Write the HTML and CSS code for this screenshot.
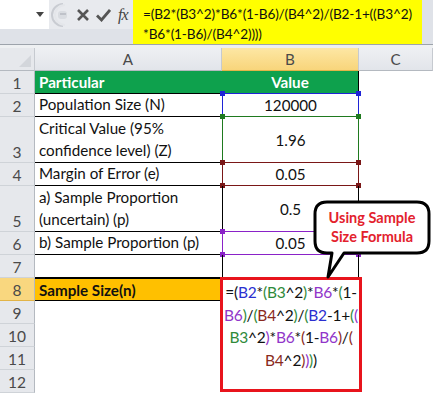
FILE: index.html
```html
<!DOCTYPE html>
<html lang="en">
<head>
    <meta charset="UTF-8">
    <meta name="viewport" content="width=device-width, initial-scale=1.0">
    <title>Sample Size Formula</title>
    <link rel="stylesheet" href="styles.css">
</head>
<body>
    <div class="formula-bar">
        <div class="bar-tools">
            <div class="tools-row">
                <div class="name-box">
                    <svg class="drop" width="8" height="5" viewBox="0 0 8 5"><path d="M0 0H8L4 5Z" fill="#444"/></svg>
                </div>
                <svg class="knob" width="18" height="26" viewBox="0 0 18 26">
                    <path d="M13 2A11 11 0 0 0 13 24" fill="none" stroke="#c9ccd2" stroke-width="2"/>
                    <path d="M15 3A10 10 0 0 0 15 23" fill="none" stroke="#e4e6ea" stroke-width="2"/>
                    <rect x="8" y="9" width="9" height="8" rx="3" fill="#d9dce1"/>
                    <path d="M10 12H16" stroke="#b6bac0" stroke-width="1.5"/>
                </svg>
                <svg class="tool" width="14" height="14" viewBox="0 0 14 14">
                    <path d="M2 2L12 12M12 2L2 12" stroke="#555" stroke-width="2.6"/>
                </svg>
                <svg class="tool" width="15" height="14" viewBox="0 0 15 14">
                    <path d="M1 7.5L5.5 12L14 2" fill="none" stroke="#555" stroke-width="2.8"/>
                </svg>
                <span class="fx">fx</span>
            </div>
        </div>
        <div class="formula-input">=(B2*(B3^2)*B6*(1-B6)/(B4^2)/(B2-1+((B3^2)<br>*B6*(1-B6)/(B4^2))))</div>
    </div>
    <div class="bar-gap"></div>

    <div class="sheet">
        <div class="corner"><svg width="12" height="12" viewBox="0 0 12 12"><path d="M12 0V12H0Z" fill="#d3d6db"/></svg></div>
        <div class="ch">A</div>
        <div class="ch ch-active">B</div>
        <div class="ch">C</div>

        <div class="rh">1</div>
        <div class="cell head">Particular</div>
        <div class="cell head val">Value</div>
        <div class="cell blank"></div>

        <div class="rh">2</div>
        <div class="cell txt">Population Size (N)</div>
        <div class="cell val ref ref-blue">120000<i class="h tl"></i><i class="h tr"></i><i class="h bl"></i><i class="h br"></i></div>
        <div class="cell blank"></div>

        <div class="rh">3</div>
        <div class="cell txt">Critical Value (95%<br>confidence level) (Z)</div>
        <div class="cell val ref ref-green">1.96<i class="h tl"></i><i class="h tr"></i><i class="h bl"></i><i class="h br"></i></div>
        <div class="cell blank"></div>

        <div class="rh">4</div>
        <div class="cell txt">Margin of Error (e)</div>
        <div class="cell val ref ref-brown">0.05<i class="h tl"></i><i class="h tr"></i><i class="h bl"></i><i class="h br"></i></div>
        <div class="cell blank"></div>

        <div class="rh">5</div>
        <div class="cell txt">a) Sample Proportion<br>(uncertain) (p)</div>
        <div class="cell val plain">0.5</div>
        <div class="cell blank"></div>

        <div class="rh">6</div>
        <div class="cell txt">b) Sample Proportion (p)</div>
        <div class="cell val ref ref-purple">0.05<i class="h tl"></i><i class="h tr"></i><i class="h bl"></i><i class="h br"></i></div>
        <div class="cell blank"></div>

        <div class="rh">7</div>
        <div class="cell txt"></div>
        <div class="cell val plain"></div>
        <div class="cell blank"></div>

        <div class="rh rh-active">8</div>
        <div class="cell result">Sample Size(n)</div>
        <div class="cell formula">
            <span class="k">=(</span><span class="c-blue">B2</span>*<span class="c-green">(B3</span>^2<span class="c-green">)</span>*<span class="c-purple">B6</span>*<span class="c-green">(</span>1-<br>
            <span class="c-purple">B6</span><span class="c-green">)</span>/<span class="c-green">(</span><span class="c-brown">B4</span>^2<span class="c-green">)</span>/<span class="c-green">(</span><span class="c-blue">B2</span>-1+<span class="c-green">(</span><span class="c-purple">(</span><br>
            <span class="c-green">B3</span>^2<span class="c-purple">)</span>*<span class="c-purple">B6</span>*<span class="c-brown">(</span>1-<span class="c-purple">B6</span><span class="c-brown">)</span>/<span class="c-brown">(</span><br>
            <span class="c-brown">B4</span>^2<span class="c-brown">)</span><span class="c-purple">)</span><span class="c-green">)</span>)
        </div>
        <div class="cell blank"></div>

        <div class="rh">9</div>
        <div class="cell"></div>
        <div class="cell blank"></div>

        <div class="rh">10</div>
        <div class="cell"></div>
        <div class="cell blank"></div>

        <div class="rh">11</div>
        <div class="cell"></div>
        <div class="cell blank"></div>

        <div class="rh">12</div>
        <div class="cell"></div>
        <div class="cell blank"></div>

        <div class="callout">
            <svg class="bubble" width="124" height="82" viewBox="0 0 124 82">
                <path d="M18 3H108Q120 3 120 15V42Q120 54 108 54H35L19 78L23 54H18Q6 54 6 42V15Q6 3 18 3Z" fill="#fff" stroke="#000" stroke-width="3" stroke-linejoin="round"/>
            </svg>
            <div class="callout-text">Using Sample<br>Size Formula</div>
        </div>
    </div>
</body>
</html>
```

FILE: styles.css
```css
body {
    margin: 0;
    width: 433px;
    height: 394px;
    overflow: hidden;
    background: #fff;
    font-family: Lato, "Liberation Sans", sans-serif;
    color: #111;
}

/* formula bar */
.formula-bar {
    display: flex;
    height: 44px;
    background: #dfe2e8;
    border-bottom: 1px solid #9da3ab;
}

.bar-tools {
    width: 133px;
}

.tools-row {
    display: flex;
    align-items: center;
    height: 29px;
    background: #e8eaee;
}

.name-box {
    display: flex;
    align-items: center;
    justify-content: flex-end;
    width: 44px;
    height: 29px;
    padding-right: 5px;
    background: #fff;
}

.knob {
    margin-left: 1px;
}

.tool {
    margin-left: 8px;
}

.tool + .tool {
    margin-left: 6px;
}

.fx {
    margin-left: 7px;
    font-family: "Liberation Serif", serif;
    font-style: italic;
    font-size: 16px;
    color: #444;
    letter-spacing: -1px;
}

.formula-input {
    width: 279px;
    padding: 4px 0 0 10px;
    background: #ffff00;
    font-size: 13.6px;
    line-height: 20px;
    letter-spacing: -0.15px;
    color: #111;
    white-space: nowrap;
}

.bar-gap {
    height: 3px;
    background: #eef0f2;
}

/* sheet grid */
.sheet {
    position: relative;
    display: grid;
    grid-template-columns: 35px 187px 137px 74px;
    grid-template-rows: 23px 23px 23px 46px 23px 46px 23px 23px 23px 23px 23px 23px 23px;
    font-size: 15.2px;
}

.corner,
.ch,
.rh {
    box-sizing: border-box;
    background: #e6e8ec;
    color: #4a4a4a;
}

.corner {
    display: flex;
    align-items: flex-end;
    justify-content: flex-end;
    padding: 0 3px 3px 0;
    border-right: 1px solid #c6cad0;
    border-bottom: 1px solid #b4b9c0;
}

.ch {
    display: flex;
    align-items: center;
    justify-content: center;
    border-right: 1px solid #c6cad0;
    border-bottom: 1px solid #b4b9c0;
    background: linear-gradient(#eef0f3, #e2e5ea);
}

.ch-active {
    background: linear-gradient(#fde7a4, #f8d57b);
    border-bottom-color: #e2b448;
}

.rh {
    display: flex;
    align-items: flex-end;
    justify-content: center;
    padding-bottom: 1px;
    font-size: 15.5px;
    border-right: 1px solid #b4b9c0;
    border-bottom: 1px solid #cfd3d8;
}

.rh-active {
    background: #f9d77f;
    border-bottom-color: #e2b448;
}

.cell {
    box-sizing: border-box;
    position: relative;
    white-space: nowrap;
}

.txt {
    display: flex;
    align-items: flex-end;
    padding: 0 0 1px 4px;
    line-height: 22px;
    border-bottom: 1px solid #000;
}

.head {
    display: flex;
    align-items: center;
    padding-left: 4px;
    background: #0ea14d;
    color: #fff;
    font-weight: bold;
    border-bottom: 1px solid #000;
}

.val {
    display: flex;
    align-items: center;
    justify-content: center;
}

.head.val {
    padding-left: 0;
    border-right: 1px solid #000;
}

.plain {
    border-left: 1px solid #000;
    border-right: 1px solid #000;
}

.ref {
    border: 1px solid var(--ref);
    margin-top: -1px;
}

.ref-blue { --ref: #1f24d6; }
.ref-green { --ref: #1f7a1f; }
.ref-brown { --ref: #7a1717; }
.ref-purple { --ref: #8a22c8; }

.h {
    position: absolute;
    width: 5px;
    height: 5px;
    background: var(--ref);
}

.tl { left: -3px; top: -3px; }
.tr { right: -3px; top: -3px; }
.bl { left: -3px; bottom: -3px; }
.br { right: -3px; bottom: -3px; }

.result {
    display: flex;
    align-items: center;
    padding-left: 4px;
    background: #ffc000;
    font-weight: bold;
    border-top: 1px solid #000;
    border-bottom: 1px solid #000;
}

.formula {
    grid-row: 9 / span 5;
    grid-column: 3;
    margin: -1px -3px 1px -2px;
    padding-top: 1px;
    border: 3px solid #e8141c;
    background: #fff;
    text-align: center;
    font-size: 15.5px;
    line-height: 22.7px;
    letter-spacing: -0.2px;
}

.c-blue { color: #2b2fd0; }
.c-green { color: #2f8a3a; }
.c-purple { color: #9135c9; }
.c-brown { color: #8a2a1c; }

.callout {
    position: absolute;
    left: 309px;
    top: 151px;
    width: 124px;
    height: 82px;
}

.bubble {
    position: absolute;
    left: 0;
    top: 0;
}

.callout-text {
    position: relative;
    padding-top: 9px;
    padding-left: 6px;
    width: 114px;
    text-align: center;
    color: #e3212d;
    font-weight: bold;
    font-size: 14.5px;
    line-height: 19px;
}
```
